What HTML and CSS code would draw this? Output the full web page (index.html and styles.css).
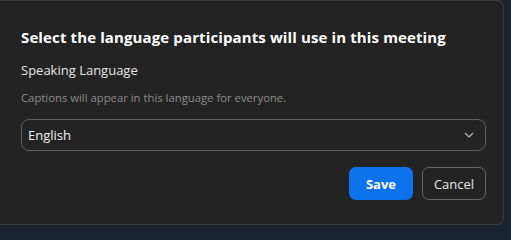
FILE: index.html
```html
<!DOCTYPE html>
<html>
<head>
<meta charset="utf-8">
<link rel="stylesheet" href="styles.css">
</head>
<body>
<div class="dialog">
  <h1 class="title">Select the language participants will use in this meeting</h1>
  <div class="label">Speaking Language</div>
  <div class="hint">Captions will appear in this language for everyone.</div>
  <div class="select">
    <span class="value">English</span>
    <svg class="chev" width="10" height="6" viewBox="0 0 10 6"><path d="M1 1 L5 5 L9 1" fill="none" stroke="#bdbdbd" stroke-width="1.2"/></svg>
  </div>
  <div class="actions">
    <button class="btn primary">Save</button>
    <button class="btn secondary">Cancel</button>
  </div>
</div>
</body>
</html>
```
FILE: styles.css
```css
html, body {
  margin: 0;
  padding: 0;
}
body {
  background: #1b2332;
  font-family: "Open Sans", "Noto Sans", sans-serif;
  overflow: hidden;
}
.dialog {
  box-sizing: border-box;
  width: 504px;
  height: 225px;
  background: #232323;
  border: 1px solid #3d3d3d;
  border-left: none;
  border-radius: 0 7px 7px 0;
  padding: 0 17px 0 21px;
  display: flex;
  flex-direction: column;
}
.title {
  margin: 25px 0 0;
  font-size: 15px;
  font-weight: 700;
  color: #ffffff;
  line-height: 22px;
  letter-spacing: 0.12px;
}
.label {
  margin-top: 13px;
  font-size: 13px;
  color: #e6e6e6;
  line-height: 18px;
}
.hint {
  margin-top: 11px;
  font-size: 11.3px;
  color: #8c8c8c;
  line-height: 16px;
}
.select {
  margin-top: 13px;
  height: 32px;
  box-sizing: border-box;
  border: 1px solid #5e5e5e;
  border-radius: 8px;
  display: flex;
  align-items: center;
  justify-content: space-between;
  padding: 0 11px 0 6px;
}
.value {
  font-size: 13px;
  color: #f2f2f2;
}
.chev {
  display: block;
}
.actions {
  margin-top: 16px;
  display: flex;
  justify-content: flex-end;
  gap: 9px;
}
.btn {
  box-sizing: border-box;
  width: 64px;
  height: 33px;
  border-radius: 7px;
  font-family: inherit;
  font-size: 13px;
  padding: 0;
  cursor: pointer;
}
.primary {
  background: #0e72ed;
  border: none;
  color: #ffffff;
  font-weight: 700;
}
.secondary {
  background: transparent;
  border: 1px solid #666666;
  color: #e8e8e8;
}
```
